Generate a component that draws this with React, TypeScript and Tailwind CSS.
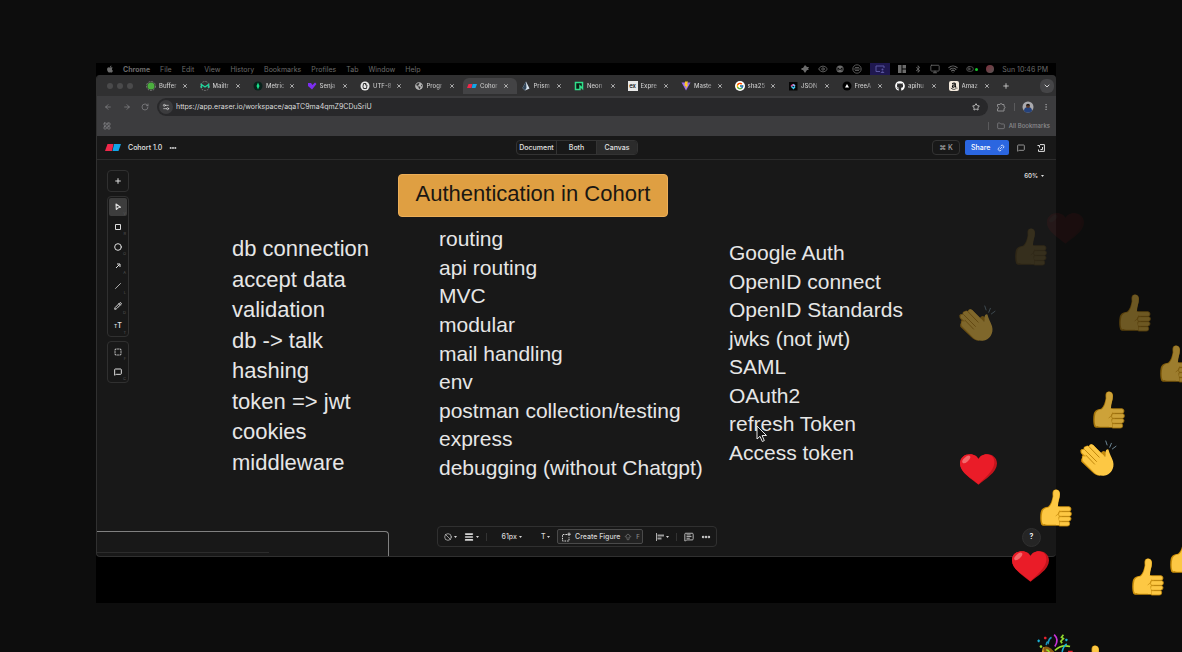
import React from "react";
import { FaApple, FaGithub, FaAmazon, FaGlobeAmericas, FaBluetoothB } from "react-icons/fa";
import { FcGoogle } from "react-icons/fc";
import {
  ArrowLeft, ArrowRight, RotateCw, Settings2, Star, Puzzle, EllipsisVertical, Folder, Plus, X,
  ChevronDown, Link2, MessageSquare, Square, Circle, Ban, Menu, Ellipsis, LayoutGrid, Wifi, Monitor,
  MessageSquareText, ArrowBigUp, Eye, ToggleLeft, Slash, Pencil, SquareDashed,
} from "lucide-react";

const menus = ["File", "Edit", "View", "History", "Bookmarks", "Profiles", "Tab", "Window", "Help"];

const tabs: { label: string; icon: React.ReactNode; active?: boolean }[] = [
  { label: "Buffer", icon: <svg viewBox="0 0 10 10" className="size-2.5"><circle cx="5" cy="5" r="4.5" fill="none" stroke="#777" strokeDasharray="2 1" /><circle cx="5" cy="5" r="3.5" fill="#4caf3f" /></svg> },
  { label: "Mailtr", icon: <svg viewBox="0 0 10 10" className="size-2.5"><circle cx="5" cy="5" r="4.5" fill="none" stroke="#777" strokeDasharray="2 1" /><path d="M1.500 7V3.500L5 6l3.500-2.500V7" fill="none" stroke="#1fd39a" strokeWidth="1.400" /></svg> },
  { label: "Metric", icon: <svg viewBox="0 0 10 10" className="size-2.5"><circle cx="5" cy="5" r="4.500" fill="#08221b" /><path d="M5 1.500 6.500 5 5 8.500 3.500 5Z" fill="#19e08a" /></svg> },
  { label: "Senja", icon: <svg viewBox="0 0 10 10" className="size-2.5"><path d="M1 2h3l1.500 2L8 1.500 9.500 3 5 8.500 1 5Z" fill="#7c2df0" /></svg> },
  { label: "UTF-8", icon: <svg viewBox="0 0 10 10" className="size-2.5"><circle cx="5" cy="5" r="4.500" fill="#e8e8e8" /><path d="M3.500 2.500H6L5.500 4H7L6.500 7.500H3.500L3 5.500Z" fill="none" stroke="#333" /></svg> },
  { label: "Progr", icon: <FaGlobeAmericas className="size-2 text-[#b5b5b5]" /> },
  { label: "Cohor", icon: <Logo className="h-1 w-2.5" />, active: true },
  { label: "Prism", icon: <svg viewBox="0 0 10 10" className="size-2.5"><path d="M5 .5 8.500 7.500 4 9.500 1.500 7Z" fill="#dbe7f2" /><path d="M5 .5 5.500 7 4 9.500 1.500 7Z" fill="#33475b" /></svg> },
  { label: "Neon", icon: <svg viewBox="0 0 10 10" className="size-2.5"><path d="M1.500 1.500h7v6L6 5v3.500H1.500Z" fill="#0c1f17" stroke="#2fe08a" strokeWidth="1.500" /></svg> },
  { label: "Expre", icon: <span className="flex size-2.5 items-center justify-center bg-[#e8e8e8] text-[6px] leading-none text-black">ex</span> },
  { label: "Maste", icon: <svg viewBox="0 0 10 10" className="size-2.5"><path d="M.5 1.500h9L5 9.500Z" fill="#9b6af5" /><path d="M4 .5h3L6 3.500h1.500L4.500 8 5 5H3.500Z" fill="#ffc928" /></svg> },
  { label: "sha25", icon: <span className="rounded-full bg-white p-px"><FcGoogle className="size-2" /></span> },
  { label: "JSON", icon: <svg viewBox="0 0 10 10" className="size-2.5"><rect x="1" y="1" width="8.500" height="8.500" fill="#050505" /><path d="M3 5.500 5 3.500" stroke="#e8488b" strokeWidth="1.600" /><path d="M5 3.500 7 5" stroke="#8fb4f5" strokeWidth="1.600" /><path d="M3.500 5.500 5.500 7.500 7 5.500" fill="none" stroke="#3ec6f0" strokeWidth="1.400" /></svg> },
  { label: "FreeA", icon: <svg viewBox="0 0 10 10" className="size-2.5"><circle cx="5" cy="5" r="4.500" fill="#000" /><path d="M5 3 7 6.500H3Z" fill="#fff" /></svg> },
  { label: "apihu", icon: <FaGithub className="size-2.5 text-white" /> },
  { label: "Amaz", icon: <span className="flex size-2.5 items-center justify-center rounded-xs bg-[#f3e9dc] text-black"><FaAmazon className="size-2" /></span> },
];

const tools = [
  { name: "Select", key: "V", icon: <svg viewBox="0 0 8 8" className="size-2"><path d="M2 1 6.500 4.200 4.300 4.700 2.300 6.500Z" fill="none" stroke="currentColor" strokeWidth="1.100" strokeLinejoin="round" /></svg>, active: true },
  { name: "Rectangle", key: "R", icon: <svg viewBox="0 0 8 8" className="size-2"><path d="M1.500 1.500H6.500V6.500H1.500Z" fill="none" stroke="currentColor" /></svg> },
  { name: "Ellipse", key: "O", icon: <Circle className="size-2" strokeWidth={3} /> },
  { name: "Arrow", key: "A", icon: <svg viewBox="0 0 8 8" className="size-2"><path d="M2 6 5.500 2.500M3 2H6V5" fill="none" stroke="currentColor" /></svg> },
  { name: "Line", key: "L", icon: <Slash className="size-1.5" strokeWidth={3} /> },
  { name: "Draw", key: "D", icon: <Pencil className="size-2" strokeWidth={3} /> },
  { name: "Text", key: "T", icon: <span className="text-[7px] leading-none font-semibold"><span className="text-[5px]">T</span>T</span> },
];

const flowNotes = ["db connection", "accept data", "validation", "db -> talk", "hashing", "token => jwt", "cookies", "middleware"];
const topicNotes = ["routing", "api routing", "MVC", "modular", "mail handling", "env", "postman collection/testing", "express", "debugging (without Chatgpt)"];
const authNotes = ["Google Auth", "OpenID connect", "OpenID Standards", "jwks (not jwt)", "SAML", "OAuth2", "refresh Token", "Access token"];

function Logo({ className }: { className: string }) {
  return (
    <svg viewBox="0 0 32 14" className={className} preserveAspectRatio="none">
      <path d="M5 0H17L14 14H0Z" fill="#f0284a" />
      <path d="M18 0H32L27 14H15Z" fill="#12a5e8" />
    </svg>
  );
}

function Caret() {
  return <svg viewBox="0 0 6 4" className="h-0.5 w-[3px]"><path d="M0 0h6L3 4Z" fill="currentColor" /></svg>;
}

function Thumb() {
  return (
    <svg viewBox="0 0 96 114" className="h-[38px] w-8">
      <path d="M42 3C47-1 60 1 60 13C61 27 53 38 54 52L60 60V110L30 110C18 110 8 112 4 107C0 98 0 80 2 70C4 58 12 54 24 53C32 47 36 34 38 22C37 12 37 6 42 3Z" fill="#c88d0a" />
      <path d="M44 3C50 0 59 3 59 14C60 27 53 38 54 52L66 58V107L30 107C20 107 10 108 7 103C4 92 5 80 7 70C9 60 16 57 27 55C35 48 38 34 40 22C39 12 40 6 44 3Z" fill="#fdc844" />
      <g fill="#fdc844" stroke="#c48a0c" strokeWidth="2.500">
        <path d="M57 98H85Q90 99 89 105Q89 111 82 111H58Z" />
        <path d="M57 83H88Q94 85 93 90Q92 96 86 97H58Q54 94 57 83Z" />
        <path d="M57 68H89Q95 69 94 75Q94 82 88 82H58Q54 79 57 68Z" />
        <path d="M54 53H87Q93 54 93 60Q93 67 87 67H59Q55 65 54 53Z" />
      </g>
      <path d="M46 54H60L58 66Q52 76 48 80V108H58L56 94Z" fill="#fdc844" />
      <path d="M47 81Q56 77 58 67" fill="none" stroke="#c48a0c" strokeWidth="2" />
    </svg>
  );
}

function Heart() {
  return (
    <svg viewBox="0 0 112 93" className="h-[31px] w-[37px]">
      <path d="M56 93C38 76 0 56 0 28C0 10 14 0 30 0C44 0 53 8 56 15C59 8 68 0 82 0C98 0 112 10 112 28C112 56 74 76 56 93Z" fill="#c3141c" />
      <path d="M56 91C38 74 0 56 0 28C0 10 14 0 30 0C44 0 53 8 56 15C59 8 68 0 82 0C96 1 105 10 104 26C103 52 72 74 56 91Z" fill="#ea1c28" />
      <ellipse cx="19" cy="16" rx="15" ry="7" transform="rotate(-42 19 16)" fill="#f4696c" />
    </svg>
  );
}

function Clap() {
  return (
    <svg viewBox="0 0 112 112" className="size-[37px]">
      <path d="M68 50L64 38Q70 30 77 36L84 50Z" fill="#c48a0c" />
      <path d="M1 32Q5 25 11 29Q9 20 18 19Q22 15 26 19Q30 9 40 15L72 50L60 108Q48 108 36 96L4 66Q2 58 6 54Q4 48 8 46Q0 40 1 32Z" fill="#d0930f" />
      <path d="M5 33Q8 27 13 29Q12 20 20 20Q24 17 28 20Q31 9 40 15L76 51Q79 46 77 36Q79 26 86 29C89 42 96 52 100 64C106 86 92 106 72 108Q52 109 40 95L8 63Q4 55 10 49L18 50L6 39Q4 36 5 33Z" fill="#fdc844" />
      <path d="M14 29L50 65M27 20L58 52M18 46L44 73" fill="none" stroke="#bf860b" strokeWidth="3" strokeLinecap="round" />
      <path d="M78 3L82 15M95 10L90 22M109 19L98 27" stroke="#6d8796" strokeWidth="3" strokeLinecap="round" />
    </svg>
  );
}

function Party() {
  return (
    <svg viewBox="0 0 112 112" className="size-[37px]">
      <path d="M18 40Q34 36 50 54Q64 68 60 82L6 108Q0 108 4 100Z" fill="#e9a92c" />
      <ellipse cx="40" cy="60" rx="13" ry="27" transform="rotate(-42 40 60)" fill="#8c5a12" />
      <path d="M28 48Q34 48 38 56" stroke="#9be02c" strokeWidth="5" fill="none" />
      <g fill="none" strokeWidth="5">
        <path d="M52 2Q68 18 54 38" stroke="#c932d8" />
        <path d="M28 34Q30 20 34 26Q36 14 44 10" stroke="#1b93b8" />
        <path d="M80 2L74 10L80 14L72 22L76 28" stroke="#8fd82e" />
        <path d="M54 50Q74 30 100 38" stroke="#9be02c" />
        <path d="M76 54Q80 36 90 30" stroke="#1bb0d4" />
      </g>
      <path d="M1 21H9M5 17V25M85 18H93M89 14V22" stroke="#1bb0d4" strokeWidth="4" />
      <path d="M21 12H29M25 8V16M94 53H108" stroke="#e8232f" strokeWidth="5" />
      <circle cx="12" cy="38" r="4" fill="#9be02c" />
    </svg>
  );
}

const art = { thumb: <Thumb />, heart: <Heart />, clap: <Clap />, party: <Party /> };

const reactions: { kind: keyof typeof art; place: string }[] = [
  { kind: "heart", place: "left-[1047px] top-[213px] opacity-[.06]" },
  { kind: "thumb", place: "left-[1015px] top-[228px] opacity-[.13]" },
  { kind: "thumb", place: "left-[1119px] top-[294px] opacity-40" },
  { kind: "clap", place: "left-[959px] top-[305px] opacity-45" },
  { kind: "thumb", place: "left-[1160px] top-[345px] opacity-60" },
  { kind: "thumb", place: "left-[1093px] top-[391px] opacity-80" },
  { kind: "clap", place: "left-[1080px] top-[440px]" },
  { kind: "heart", place: "left-[960px] top-[454px]" },
  { kind: "thumb", place: "left-[1040px] top-[489px]" },
  { kind: "thumb", place: "left-[1170px] top-[536px]" },
  { kind: "heart", place: "left-[1012px] top-[551px]" },
  { kind: "thumb", place: "left-[1132px] top-[558px]" },
  { kind: "party", place: "left-[1037px] top-[634px]" },
  { kind: "thumb", place: "left-[1079px] top-[645px]" },
];

function MenuBar() {
  return (
    <div className="flex h-3 items-center justify-between bg-black pr-2 pl-2.5 text-[7px] leading-none text-[#6b6b6b]">
      <nav className="flex items-center gap-2.5">
        <FaApple className="-mr-px size-2" />
        <span className="font-bold">Chrome</span>
        {menus.map((m) => <span key={m}>{m}</span>)}
      </nav>
      <div className="flex items-center gap-2">
        <svg viewBox="0 0 10 10" className="size-2.5"><path d="M5 1 7 3H9L8 5 9 6H7L5 9 3 6H1L2 5 1 4H3Z" fill="currentColor" /></svg>
        <Eye className="size-2.5" />
        <svg viewBox="0 0 10 10" className="size-2"><circle cx="5" cy="5" r="4.500" fill="currentColor" /><path d="M2.500 7V3.500L5 6 7.500 3.500V7" fill="none" stroke="#000" strokeWidth="1.200" /></svg>
        <svg viewBox="0 0 10 10" className="size-2.5"><circle cx="5" cy="5" r="4.200" fill="none" stroke="currentColor" strokeWidth=".8" /><path d="M1.500 5H8.500M3 3.500H7M3 6.500H7" stroke="currentColor" strokeWidth=".8" /></svg>
        <span className="flex h-3 w-5 items-center justify-center bg-[#1f1850] text-[#5b57a0]">
          <svg viewBox="0 0 10 10" className="size-2.5"><path d="M5 7.500H1V2H9V4" fill="none" stroke="currentColor" /><circle cx="7.500" cy="5.500" r="1" fill="currentColor" /><path d="M5.500 9Q7.500 5.500 9.500 9Z" fill="currentColor" /></svg>
        </span>
        <svg viewBox="0 0 8 8" className="size-2"><path d="M0 0H3.500V8H0ZM4.500 0H8V3.500H4.500ZM4.500 4.500H8V8H4.500Z" fill="currentColor" /></svg>
        <FaBluetoothB className="size-2" />
        <Monitor className="size-2.5" />
        <Wifi className="size-2.5" strokeWidth={2.500} />
        <span className="flex items-center gap-px"><ToggleLeft className="size-2" /><i className="size-[3px] rounded-full bg-[#18c52c]" /></span>
        <i className="size-2 rounded-full bg-linear-to-br from-[#7a2a3a] to-[#555]" />
        <span>Sun 10:46 PM</span>
      </div>
    </div>
  );
}

function TabStrip() {
  return (
    <div className="flex h-[21px] items-center bg-[#303031] pl-2.5 text-[6px] leading-none font-medium text-[#d4d4d4]">
      <div className="flex w-[35px] gap-1">
        <i className="size-1.5 rounded-full bg-[#4a4a4b]" /><i className="size-1.5 rounded-full bg-[#4a4a4b]" /><i className="size-1.5 rounded-full bg-[#4a4a4b]" />
      </div>
      {tabs.map((t) => (
        <div key={t.label} className={`flex h-4 min-w-0 flex-1 items-center rounded-t-md pr-2 pl-1 ${t.active ? "bg-[#434345]" : ""}`}>
          <button className="flex min-w-0 flex-1 items-center gap-[3px]">
            <span className="flex w-2.5 shrink-0 justify-center">{t.icon}</span>
            <span className="bg-linear-to-r from-[#d4d4d4] from-75% to-[#707072] bg-clip-text text-left leading-[10px] whitespace-nowrap text-transparent">{t.label}</span>
          </button>
          <button aria-label={`Close ${t.label}`}><X className="size-1.5" strokeWidth={3} /></button>
        </div>
      ))}
      <div className="flex w-[58px] items-center justify-between pr-0.5 pl-1">
        <button aria-label="New tab"><Plus className="size-2" strokeWidth={2.500} /></button>
        <button aria-label="Search tabs" className="flex size-3.5 items-center justify-center rounded-md bg-[#454547]"><ChevronDown className="size-2" strokeWidth={3} /></button>
      </div>
    </div>
  );
}

function AddressBar() {
  return (
    <div className="bg-[#3c3c3e] text-[7px] text-[#8d8d8f]">
      <div className="flex h-[22px] items-center">
        <div className="flex w-[60px] justify-between pr-2 pl-[7px]">
          <button aria-label="Back"><ArrowLeft className="size-2" /></button>
          <button aria-label="Forward"><ArrowRight className="size-2" /></button>
          <button aria-label="Reload"><RotateCw className="size-2" /></button>
        </div>
        <div className="flex h-[18px] flex-1 items-center gap-[3px] rounded-full bg-[#28282a] pr-2 pl-0.5 text-[#dcdcdc]">
          <span className="flex size-3.5 items-center justify-center rounded-full bg-[#3c3c3e]"><Settings2 className="size-2" /></span>
          <input aria-label="Address" className="min-w-0 flex-1 bg-transparent outline-none" defaultValue="https://app.eraser.io/workspace/aqaTC9ma4qmZ9CDuSriU" />
          <button aria-label="Bookmark this page"><Star className="size-2" strokeWidth={2.500} /></button>
        </div>
        <div className="flex w-[68px] items-center justify-between pr-1.5 pl-2">
          <button aria-label="Extensions">
            <svg viewBox="0 0 10 10" className="size-2.5"><path d="M1.500 2.500H4A1 1 0 0 1 6 2.500H8V4.500A1 1 0 0 1 8 6.500V9H1.500V6.800A1.100 1.100 0 0 0 1.500 4.600Z" fill="none" stroke="currentColor" /></svg>
          </button>
          <i className="h-2 w-px bg-[#5a5a5c]" />
          <button aria-label="Profile">
            <svg viewBox="0 0 12 12" className="size-3"><circle cx="6" cy="6" r="5.500" fill="#a9a9ad" /><path d="M2 10a4 4 0 0 1 8 0L8 11.500H4Z" fill="#25427c" /><circle cx="6" cy="5" r="2" fill="#5a3a2c" /><path d="M3.800 4.500Q6 1 8.200 4.500Z" fill="#161616" /></svg>
          </button>
          <button aria-label="Chrome menu"><EllipsisVertical className="size-2" strokeWidth={3} /></button>
        </div>
      </div>
      <div className="flex h-[18px] items-center justify-between px-1.5 pb-1">
        <button aria-label="Apps" className="pt-0.5"><LayoutGrid className="size-2" /></button>
        <div className="flex items-center gap-2 pt-0.5">
          <i className="h-2 w-px bg-[#5a5a5c]" />
          <button className="flex items-center gap-1 text-[6px] leading-3 font-medium"><Folder className="size-2" />All Bookmarks</button>
        </div>
      </div>
    </div>
  );
}

function AppHeader() {
  return (
    <header className="grid h-6 grid-cols-[1fr_auto_1fr] items-center border-b border-[#2c2c2c] pr-[7px] pl-2 text-[7px] leading-none font-medium text-[#e2e2e2]">
      <div className="flex items-center gap-[7px]">
        <Logo className="h-[7px] w-4" />
        <span>Cohort 1.0</span>
        <button aria-label="File menu"><Ellipsis className="size-2" strokeWidth={4} /></button>
      </div>
      <div className="grid h-[15px] grid-cols-3 divide-x divide-[#333] overflow-hidden rounded-sm border border-[#333]">
        <button className="w-10">Document</button>
        <button>Both</button>
        <button className="bg-[#2b2b2b]">Canvas</button>
      </div>
      <div className="flex items-center justify-end gap-[5px]">
        <button className="h-[15px] w-7 rounded-sm border border-[#333] text-[#a5a5a5]">⌘ K</button>
        <button className="flex h-[15px] w-11 items-center justify-between rounded-xs bg-[#2b66e0] pr-1 pl-1.5 text-white">Share<Link2 className="size-2 -rotate-45" /></button>
        <button aria-label="Comments" className="flex w-3.5 justify-center"><MessageSquare className="size-2 text-[#aaa]" strokeWidth={2.500} /></button>
        <button aria-label="Side panel" className="flex w-4 justify-center">
          <svg viewBox="0 0 8 8" className="size-2"><path d="M3 .6H7.400V7.400H1.500V5.500M.5 1.500H2.500V3.500M3.500 5.500H5.500V3" fill="none" stroke="currentColor" /></svg>
        </button>
      </div>
    </header>
  );
}

function ToolButton({ name, shortcut, active, children }: { name: string; shortcut: string; active?: boolean; children: React.ReactNode }) {
  return (
    <button aria-label={name} className={`relative flex h-[18px] w-full items-center justify-center rounded-xs ${active ? "bg-[#3d3d3d]" : ""}`}>
      {children}
      <span className="absolute right-px bottom-0 text-[4px] leading-none text-[#555]">{shortcut}</span>
    </button>
  );
}

function Canvas() {
  return (
    <main className="relative flex-1 overflow-hidden">
      <div className="absolute top-[14px] left-[301px] flex h-[43px] w-[270px] items-start justify-center rounded-sm border border-[#ecae58] bg-[#df9f42] pt-1.5 font-[Liberation_Sans,sans-serif] text-[22px] leading-[26px] text-[#1a1712]">
        Authentication in Cohort
      </div>
      <div className="font-[Liberation_Sans,sans-serif] whitespace-nowrap text-[#e6e6e6]">
        <ul className="absolute top-[75px] left-[135px] flex h-[242px] flex-col justify-between text-[22px] leading-7">
          {flowNotes.map((n) => <li key={n}>{n}</li>)}
        </ul>
        <ul className="absolute top-[65px] left-[342px] flex h-[257px] flex-col justify-between text-[21px] leading-7">
          {topicNotes.map((n) => <li key={n}>{n}</li>)}
        </ul>
        <ul className="absolute top-[79px] left-[632px] flex h-[228px] flex-col justify-between text-[21px] leading-7">
          {authNotes.map((n) => <li key={n}>{n}</li>)}
        </ul>
      </div>

      <div className="absolute bottom-0 left-0 flex h-[25px] w-[292px] flex-col justify-end rounded-tr-sm border-t border-r border-[#808080]">
        <i className="h-1 w-[172px] border-t border-[#2c2c2c]" />
      </div>

      <aside className="absolute top-2.5 left-2.5 flex w-[22px] flex-col gap-1 text-[#dedede]">
        <div className="flex h-[22px] items-center justify-center rounded-sm border border-[#303030]"><button aria-label="Insert"><Plus className="size-2" strokeWidth={3} /></button></div>
        <div className="flex h-[141px] flex-col justify-between rounded-sm border border-[#303030] p-px">
          {tools.map((t) => <ToolButton key={t.name} name={t.name} shortcut={t.key} active={t.active}>{t.icon}</ToolButton>)}
        </div>
        <div className="flex h-[42px] flex-col justify-between rounded-sm border border-[#303030] p-px">
          <ToolButton name="Figure" shortcut="F"><SquareDashed className="size-2" strokeWidth={3} /></ToolButton>
          <ToolButton name="Comment" shortcut="C"><MessageSquare className="size-2" strokeWidth={3} /></ToolButton>
        </div>
      </aside>

      <button className="absolute top-3 right-3 flex items-center gap-[3px] text-[6px] leading-2 font-semibold text-[#dedede]">60% <Caret /></button>

      <div className="absolute bottom-[9px] left-1/2 flex h-[21px] w-[280px] -translate-x-1/2 items-center justify-between rounded-sm border border-[#303030] pr-1 pl-1.5 text-[7px] leading-none font-medium text-[#d6d6d6]">
        <button aria-label="Fill" className="flex items-center gap-0.5"><Ban className="size-2" /><Caret /></button>
        <button aria-label="Stroke" className="flex items-center gap-0.5"><Menu className="size-2.5" strokeWidth={4} /><Caret /></button>
        <i className="h-2 w-px bg-[#333]" />
        <button className="flex items-center gap-0.5 pl-2">61px <Caret /></button>
        <button className="flex items-center gap-0.5 pl-3">T <Caret /></button>
        <button className="flex h-[15px] w-[86px] items-center justify-center gap-1 rounded-xs border border-[#4a4a4a] bg-[#222]">
          <svg viewBox="0 0 10 10" className="size-2.5"><path d="M6 2.500H1.500V9H8V5" fill="none" stroke="currentColor" strokeDasharray="1.600 1" /><path d="M8 .5V4M6.300 2.200H9.800" stroke="currentColor" /></svg>
          Create Figure<ArrowBigUp className="size-2 text-[#888]" /><span className="text-[6px] text-[#888]">F</span>
        </button>
        <button aria-label="Align" className="flex items-center gap-0.5 pl-1.5">
          <svg viewBox="0 0 8 8" className="size-2"><path d="M.5 0V8" stroke="currentColor" strokeWidth=".8" /><path d="M1.500 1.500H8V3.500H1.500ZM1.500 4.500H5.500V6.500H1.500Z" fill="#9a9a9a" /></svg>
          <Caret />
        </button>
        <i className="h-2 w-px bg-[#333]" />
        <button aria-label="Add comment"><MessageSquareText className="size-2.5" /></button>
        <button aria-label="More"><Ellipsis className="size-2.5" strokeWidth={4} /></button>
      </div>

      <button className="absolute right-[15px] bottom-[9px] flex size-[19px] items-center justify-center rounded-full border border-[#303030] bg-[#252525] text-[7px] font-semibold text-white">?</button>

      <svg viewBox="0 0 12 18" className="absolute top-[265px] left-[659px] h-[18px] w-3">
        <path d="M1 1V14L4 11.300 6.300 16.500 8.300 15.600 6.100 10.500H10.500Z" fill="#111" stroke="#e8e8e8" strokeWidth="1" />
      </svg>
    </main>
  );
}

export default function App() {
  return (
    <div className="relative flex min-h-screen flex-col overflow-hidden bg-[#0d0d0d] pt-[63px] pr-[126px] pb-[49px] pl-24 font-[Inter,sans-serif]">
      <section className="flex flex-1 flex-col bg-black pb-[46px]">
        <MenuBar />
        <div className="flex flex-1 flex-col overflow-hidden rounded-sm border-b border-l border-[#303030] bg-[#181818]">
          <TabStrip />
          <AddressBar />
          <AppHeader />
          <Canvas />
        </div>
      </section>
      <div className="pointer-events-none absolute inset-0 overflow-hidden">
        {reactions.map((r) => <div key={r.place} className={`absolute ${r.place}`}>{art[r.kind]}</div>)}
      </div>
    </div>
  );
}
